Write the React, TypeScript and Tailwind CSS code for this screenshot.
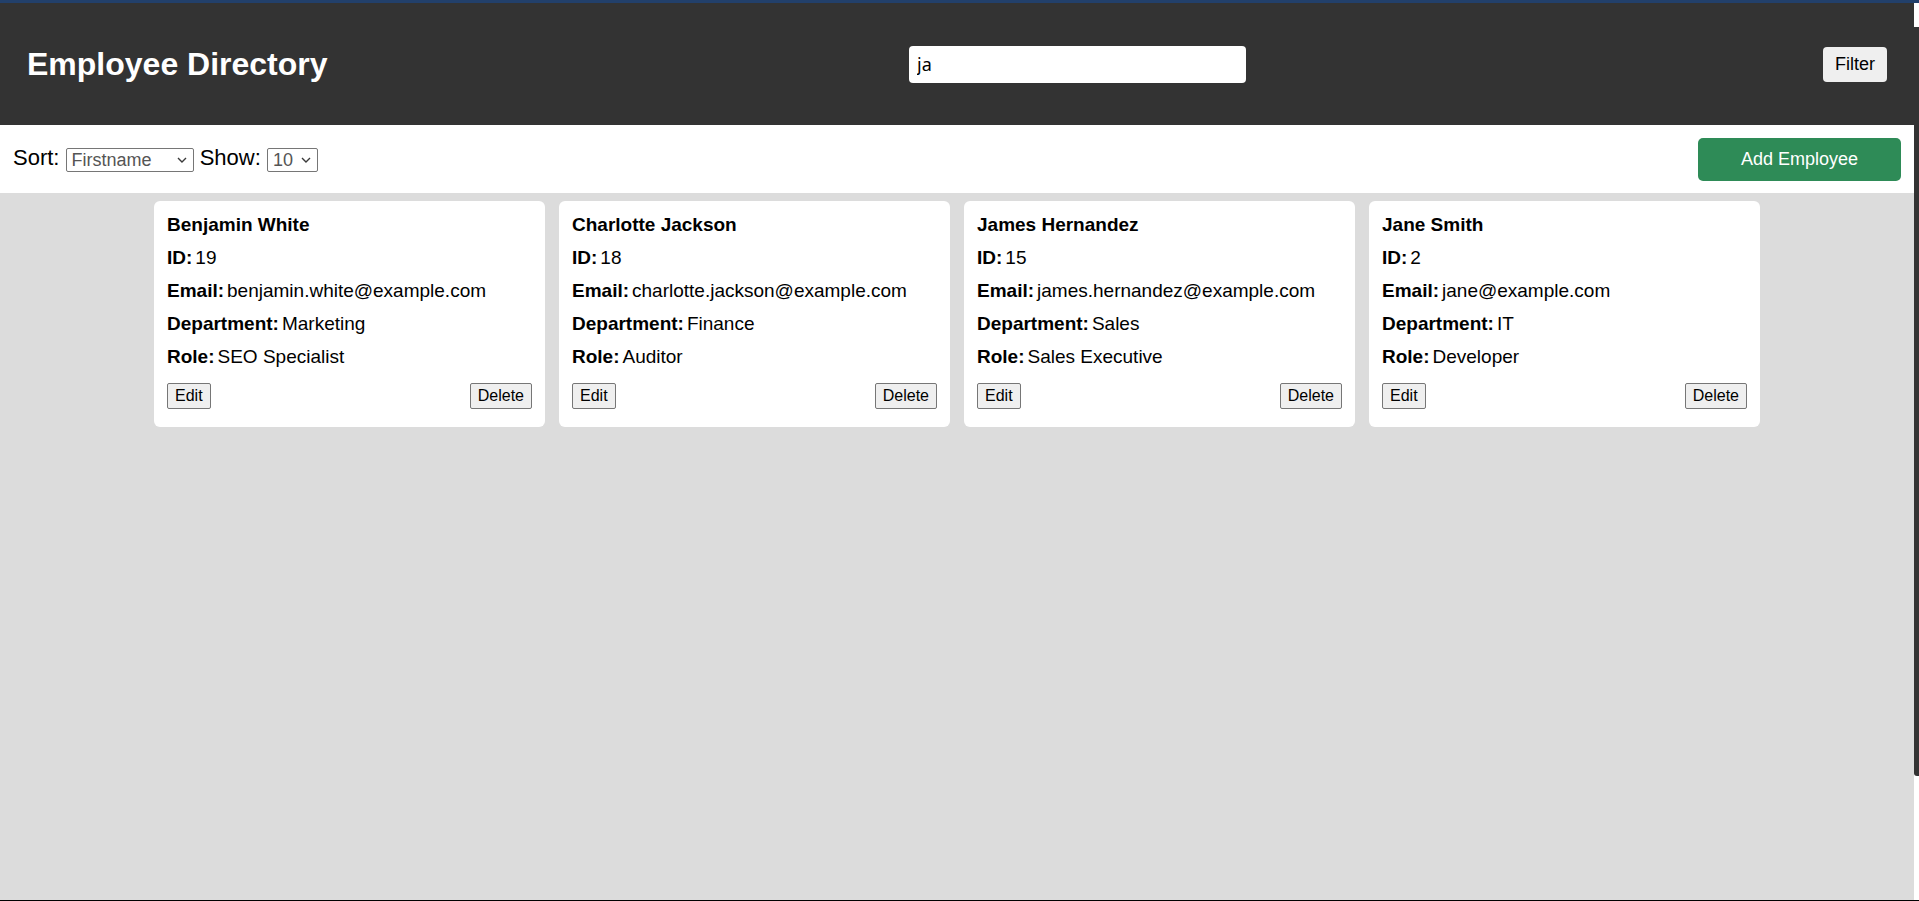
import React from "react";

const employees = [
  { name: "Benjamin White", id: 19, email: "benjamin.white@example.com", dept: "Marketing", role: "SEO Specialist" },
  { name: "Charlotte Jackson", id: 18, email: "charlotte.jackson@example.com", dept: "Finance", role: "Auditor" },
  { name: "James Hernandez", id: 15, email: "james.hernandez@example.com", dept: "Sales", role: "Sales Executive" },
  { name: "Jane Smith", id: 2, email: "jane@example.com", dept: "IT", role: "Developer" },
];

function Chevron() {
  return (
    <svg width="10" height="6" viewBox="0 0 10 6" className="pointer-events-none absolute right-[7px] top-[10px]">
      <path d="M1 1 L5 5 L9 1" fill="none" stroke="#3a3a3a" strokeWidth="1.4" />
    </svg>
  );
}

function FakeSelect({ value, width, options }: { value: string; width: string; options: string[] }) {
  return (
    <span className={`relative inline-block align-middle ${width}`}>
      <select
        defaultValue={value}
        className="h-[24px] w-full appearance-none rounded-[2px] border border-[#767676] bg-white pl-[5px] text-[18px] leading-[20px] text-[#555] outline-none"
        style={{ fontFamily: '"Liberation Sans", Arial, sans-serif' }}
      >
        {options.map((o) => (
          <option key={o}>{o}</option>
        ))}
      </select>
      <Chevron />
    </span>
  );
}

function Field({ label, value }: { label: string; value: React.ReactNode }) {
  return (
    <div className="h-[33px] leading-[33px]">
      <b>{label}</b>
      <span className="ml-[3px]">{value}</span>
    </div>
  );
}

function Card({ e }: { e: (typeof employees)[number] }) {
  return (
    <div className="flex w-[391px] flex-col rounded-[6px] bg-white px-[13px] pt-[7px] pb-[18px] text-[19px] text-black">
      <div className="h-[33px] leading-[33px] font-bold">{e.name}</div>
      <Field label="ID:" value={e.id} />
      <Field label="Email:" value={e.email} />
      <Field label="Department:" value={e.dept} />
      <Field label="Role:" value={e.role} />
      <div className="mt-[10px] flex justify-between">
        <button className="rounded-[2px] border border-[#767676] bg-[#efefef] px-[7px] py-[3px] text-[16px] leading-[18px] text-black">
          Edit
        </button>
        <button className="rounded-[2px] border border-[#767676] bg-[#efefef] px-[7px] py-[3px] text-[16px] leading-[18px] text-black">
          Delete
        </button>
      </div>
    </div>
  );
}

export default function App() {
  return (
    <div
      className="flex h-[901px] w-full flex-col overflow-hidden bg-[#dcdcdc]"
      style={{ fontFamily: '"Liberation Sans", Arial, sans-serif' }}
    >
      <div className="h-[3px] w-full shrink-0 bg-[#22406b]" />
      <div className="flex min-h-0 flex-1">
        <div className="flex min-w-0 flex-1 flex-col">
          <header className="grid h-[122px] shrink-0 grid-cols-[882px_337px_1fr] items-center bg-[#333333] pl-[27px] pr-[27px]">
            <h1 className="text-[32px] font-bold leading-[37px] text-white">Employee Directory</h1>
            <input
              defaultValue="ja"
              className="h-[37px] w-[337px] rounded-[4px] bg-white px-[8px] text-[18px] text-black outline-none"
              style={{ fontFamily: '"Noto Sans", "Open Sans", sans-serif' }}
            />
            <div className="flex justify-end">
              <button className="h-[35px] w-[64px] rounded-[4px] bg-[#efefef] text-[18px] text-black">Filter</button>
            </div>
          </header>
          <div className="flex h-[68px] shrink-0 items-center justify-between bg-white px-[13px]">
            <div className="text-[22px] leading-[24px] text-black">
              Sort: <FakeSelect value="Firstname" width="w-[128px]" options={["Firstname", "Lastname", "ID"]} /> Show:{" "}
              <FakeSelect value="10" width="w-[51px]" options={["10", "20", "50"]} />
            </div>
            <button className="h-[43px] w-[203px] rounded-[5px] bg-[#2e8b57] text-[18px] text-white">Add Employee</button>
          </div>
          <main className="flex flex-1 items-start justify-center gap-[14px] pt-[8px]">
            {employees.map((e) => (
              <Card key={e.id} e={e} />
            ))}
          </main>
        </div>
        <div className="flex w-[5px] shrink-0 flex-col bg-white">
          <div className="mt-[24px] h-[749px] rounded-bl-[3px] bg-[#333333]" />
        </div>
      </div>
      <div className="h-[1px] w-full shrink-0 bg-black" />
    </div>
  );
}
